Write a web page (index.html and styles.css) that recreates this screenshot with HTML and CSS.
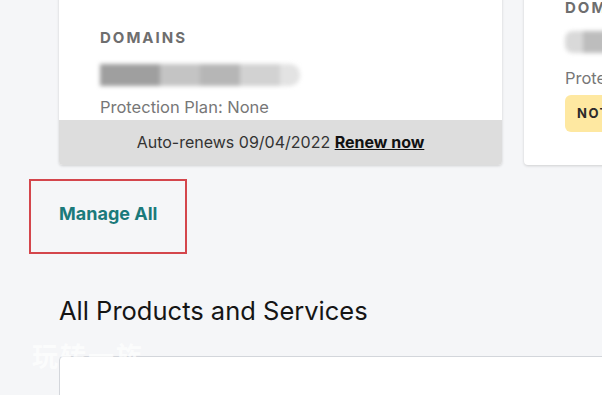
FILE: index.html
```html
<!DOCTYPE html>
<html lang="en">
<head>
<meta charset="utf-8">
<title>Products</title>
<link rel="stylesheet" href="styles.css">
</head>
<body>
<div class="page">
  <div class="cards">
    <div class="card card-main">
      <div class="card-body card-body-main">
        <div class="label">DOMAINS</div>
        <div class="redacted redacted-wide"><span></span><span></span><span></span><span></span><span></span></div>
        <div class="plan">Protection Plan: None</div>
      </div>
      <div class="card-footer">Auto-renews 09/04/2022 <a class="renew" href="#">Renew now</a></div>
    </div>
    <div class="card card-side">
      <div class="card-body card-body-side">
        <div class="label">DOMAINS</div>
        <div class="redacted redacted-short"><span></span><span></span></div>
        <div class="plan plan-side">Protection Plan: None</div>
        <div class="badge">NOT PROTECTED</div>
      </div>
    </div>
  </div>
  <div class="annot">
    <a class="manage" href="#">Manage All</a>
  </div>
  <h2 class="section-title">All Products and Services</h2>
  <div class="panel"></div>
</div>
<div class="watermark">玩转一族</div>
</body>
</html>
```
FILE: styles.css
```css
html, body {
  margin: 0;
  padding: 0;
}
body {
  background: #f5f6f8;
  font-family: Inter, "Noto Sans", sans-serif;
  width: 602px;
  height: 395px;
  overflow: hidden;
  position: relative;
}
.page {
  padding-left: 59px;
}
.cards {
  display: flex;
  gap: 22px;
  margin-top: -60px;
  height: 225px;
}
.card {
  background: #fff;
  border-radius: 4px;
  box-shadow: 0 1px 3px rgba(0, 0, 0, 0.16);
  display: flex;
  flex-direction: column;
  overflow: hidden;
}
.card-main {
  width: 443px;
  flex: none;
}
.card-side {
  width: 300px;
  flex: none;
}
.card-body {
  flex: 1;
  padding-left: 41px;
}
.card-body-main {
  padding-top: 88px;
}
.card-body-side {
  padding-top: 58px;
}
.label {
  font-size: 15px;
  line-height: 20px;
  font-weight: 700;
  letter-spacing: 2px;
  color: #6e6e6e;
}
.redacted {
  display: flex;
  height: 22px;
  margin-top: 16px;
  filter: blur(2px);
}
.redacted span {
  display: block;
  height: 100%;
}
.redacted-wide span:nth-child(1) { width: 60px; background: #9f9f9f; }
.redacted-wide span:nth-child(2) { width: 40px; background: #c4c4c4; }
.redacted-wide span:nth-child(3) { width: 40px; background: #b6b6b6; }
.redacted-wide span:nth-child(4) { width: 40px; background: #d2d2d2; }
.redacted-wide span:nth-child(5) { width: 20px; background: #e3e3e3; border-radius: 0 10px 10px 0; }
.redacted-short {
  margin-top: 13px;
}
.redacted-short span:nth-child(1) { width: 18px; background: #d9d9d9; border-radius: 8px 0 0 8px; }
.redacted-short span:nth-child(2) { width: 40px; background: #bdbdbd; }
.plan {
  font-size: 16.5px;
  line-height: 20px;
  color: #777;
  margin-top: 11px;
}
.plan-side {
  margin-top: 15px;
}
.badge {
  display: inline-block;
  margin-top: 7px;
  background: #fee8a1;
  border-radius: 6px;
  height: 37px;
  line-height: 37px;
  padding: 0 12px;
  font-size: 13px;
  font-weight: 700;
  letter-spacing: 1.5px;
  color: #2a2a2a;
  white-space: nowrap;
  width: 200px;
}
.card-footer {
  background: #dddddd;
  height: 45px;
  line-height: 45px;
  text-align: center;
  font-size: 16px;
  color: #333;
}
.renew {
  color: #111;
  font-weight: 700;
  text-decoration: underline;
}
.annot {
  margin-top: 14px;
  margin-left: -30px;
  width: 154px;
  height: 71px;
  border: 2px solid #d4464c;
}
.manage {
  display: block;
  margin: 21px 0 0 28px;
  font-size: 18px;
  line-height: 24px;
  font-weight: 700;
  color: #1b7a7b;
  text-decoration: none;
}
.section-title {
  margin: 41px 0 0;
  font-size: 25.5px;
  line-height: 32px;
  font-weight: 400;
  color: #151515;
}
.panel {
  margin-top: 29px;
  height: 80px;
  background: #fff;
  border: 1px solid #d3d6db;
  border-radius: 4px;
  margin-right: -20px;
}
.watermark {
  position: absolute;
  left: 32px;
  top: 340px;
  font-family: "Noto Sans CJK SC", sans-serif;
  font-size: 26px;
  font-weight: 700;
  letter-spacing: 2px;
  color: rgba(255, 255, 255, 0.7);
  line-height: 30px;
}
```
